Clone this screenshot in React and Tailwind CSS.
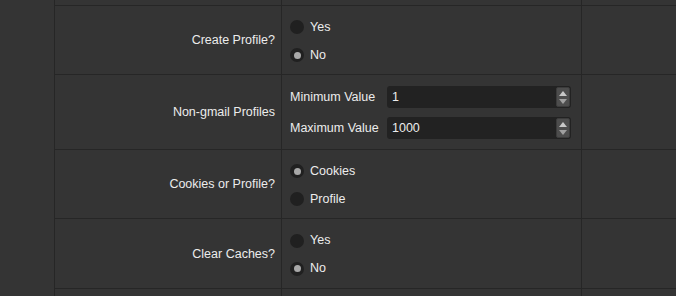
const font = { fontFamily: '"Liberation Sans", Arial, sans-serif' };

function Radio({ label, checked }) {
  return (
    <div className="flex items-center gap-[6px] h-[14px]">
      <div className="w-[14px] h-[14px] rounded-full bg-[#202020] flex items-center justify-center shrink-0">
        {checked && <div className="w-[7px] h-[7px] rounded-full bg-[#a8a8a8]" />}
      </div>
      <span>{label}</span>
    </div>
  );
}

function RadioGroup({ options, value }) {
  return (
    <div className="flex flex-col gap-[14px] mt-[2px]">
      {options.map((o) => (
        <Radio key={o} label={o} checked={o === value} />
      ))}
    </div>
  );
}

function SpinBox({ label, value }) {
  return (
    <div className="flex items-center h-[22px]">
      <span className="w-[97px] shrink-0">{label}</span>
      <div className="w-[184px] h-[22px] rounded-[3px] bg-[#222222] flex items-center">
        <span className="flex-1 pl-[5px]">{value}</span>
        <div className="w-[14px] h-[20px] mr-[1px] rounded-[2px] bg-[#4d4d4d] border border-[#3c3c3c] flex flex-col items-center justify-center gap-[3px]">
          <svg width="8" height="5" viewBox="0 0 8 5">
            <path d="M4 0 L8 5 L0 5 Z" fill="#c8c8c8" />
          </svg>
          <svg width="8" height="5" viewBox="0 0 8 5">
            <path d="M0 0 L8 0 L4 5 Z" fill="#a0a0a0" />
          </svg>
        </div>
      </div>
    </div>
  );
}

function Row({ h, label, children }) {
  return (
    <div className={`flex border-b border-[#262626] ${h}`}>
      <div className="w-[227px] border-r border-[#262626] flex items-center justify-end pr-[6px] pt-[1px]">
        {label}
      </div>
      <div className="w-[300px] border-r border-[#262626] flex flex-col justify-center pl-[8px]">
        {children}
      </div>
      <div className="flex-1" />
    </div>
  );
}

export default function App() {
  return (
    <div
      className="w-[676px] h-[296px] overflow-hidden bg-[#343434] text-[#ececec] text-[12.5px] flex"
      style={font}
    >
      <div className="w-[55px] border-r border-[#262626] shrink-0" />
      <div className="flex-1 flex flex-col">
        <div className="flex border-b border-[#262626] h-[6px]">
          <div className="w-[227px] border-r border-[#262626]" />
          <div className="w-[300px] border-r border-[#262626]" />
        </div>
        <Row h="h-[69px]" label="Create Profile?">
          <RadioGroup options={["Yes", "No"]} value="No" />
        </Row>
        <Row h="h-[75px]" label="Non-gmail Profiles">
          <div className="flex flex-col gap-[9px] mt-[1px]">
            <SpinBox label="Minimum Value" value="1" />
            <SpinBox label="Maximum Value" value="1000" />
          </div>
        </Row>
        <Row h="h-[69px]" label="Cookies or Profile?">
          <RadioGroup options={["Cookies", "Profile"]} value="Cookies" />
        </Row>
        <Row h="h-[70px]" label="Clear Caches?">
          <RadioGroup options={["Yes", "No"]} value="No" />
        </Row>
        <div className="flex flex-1">
          <div className="w-[227px] border-r border-[#262626]" />
          <div className="w-[300px] border-r border-[#262626]" />
        </div>
      </div>
    </div>
  );
}
